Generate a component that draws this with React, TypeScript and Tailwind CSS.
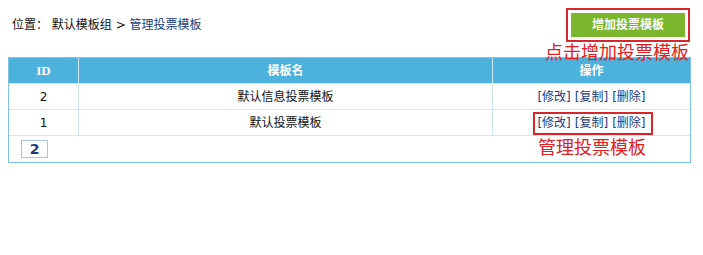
import React from "react";

const cjk = { fontFamily: '"DejaVu Sans", "Noto Sans CJK SC", sans-serif' };

export default function App() {
  const rows = [
    { id: "2", name: "默认信息投票模板" },
    { id: "1", name: "默认投票模板" },
  ];
  return (
    <div className="relative w-[703px] h-[255px] bg-white text-[12px]" style={cjk}>
      <div className="flex items-start justify-between h-[57px]">
        <div className="pl-[12px] pt-[17px] text-[12px] leading-[16px] text-[#111]">
          位置： 默认模板组 &gt; <span className="text-[#1b3d7a]">管理投票模板</span>
        </div>
        <div className="mt-[8px] mr-[13px] border-2 border-[#d8262a] p-[3px]">
          <button className="w-[114px] h-[24px] bg-[#7ab72c] text-white font-bold text-[12px] leading-[24px]">
            增加投票模板
          </button>
        </div>
      </div>
      <div className="ml-[8px] w-[683px] border border-[#7fc3e2]">
        <div className="flex h-[26px] bg-[#4db1de] text-white font-bold border-b border-[#cde9f6]">
          <div className="w-[70px] flex items-center justify-center border-r border-[#cde9f6] text-[13px]" style={{ fontFamily: '"Liberation Serif", serif' }}>
            ID
          </div>
          <div className="w-[414px] flex items-center justify-center border-r border-[#cde9f6]">模板名</div>
          <div className="flex-1 flex items-center justify-center">操作</div>
        </div>
        {rows.map((r) => (
          <div key={r.id} className="flex h-[26px] border-b border-[#cde9f6] text-[#111]">
            <div className="w-[70px] flex items-center justify-center border-r border-[#cde9f6]">{r.id}</div>
            <div className="w-[414px] flex items-center justify-center border-r border-[#cde9f6]">{r.name}</div>
            <div className="flex-1 flex items-center justify-center text-[#1b3d7a] gap-[4px]">
              <span>[修改]</span>
              <span>[复制]</span>
              <span>[删除]</span>
            </div>
          </div>
        ))}
        <div className="h-[26px] flex items-center pl-[12px]">
          <div className="w-[27px] h-[18px] border border-[#a9c6df] flex items-center justify-center text-[#1b3d7a] font-bold text-[14px]">
            2
          </div>
        </div>
      </div>
      <div
        className="absolute left-[545px] top-[40px] text-[18px] leading-[22px] text-[#e0201e] tracking-[0px]"
        style={{ fontFamily: '"Noto Sans CJK SC", sans-serif' }}
      >
        点击增加投票模板
      </div>
      <div className="absolute left-[533px] top-[112px] w-[120px] h-[23px] border-2 border-[#d8262a]" />
      <div
        className="absolute left-[538px] top-[135px] text-[18px] leading-[22px] text-[#e0201e]"
        style={{ fontFamily: '"Noto Sans CJK SC", sans-serif' }}
      >
        管理投票模板
      </div>
    </div>
  );
}
